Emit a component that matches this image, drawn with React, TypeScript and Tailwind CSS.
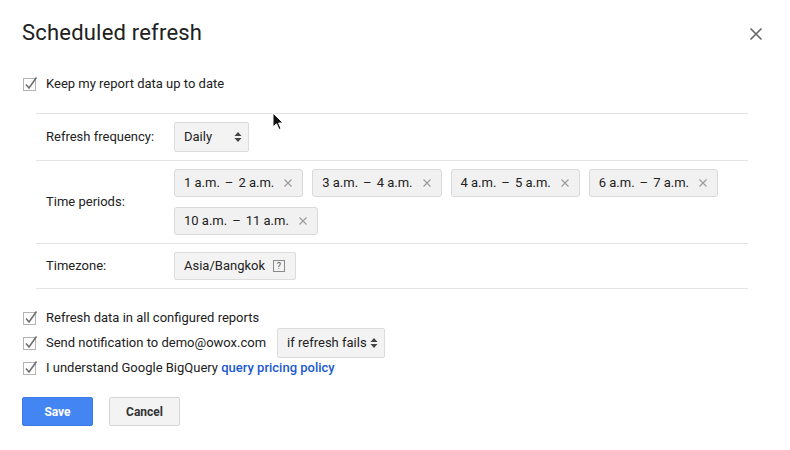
import React from "react";

const periods = [
  ["1 a.m.", "2 a.m."],
  ["3 a.m.", "4 a.m."],
  ["4 a.m.", "5 a.m."],
  ["6 a.m.", "7 a.m."],
  ["10 a.m.", "11 a.m."],
];

function Check() {
  return (
    <svg width="16" height="16" viewBox="0 0 16 16" className="ml-[1px] shrink-0">
      <rect x="0.5" y="2.5" width="12" height="12" fill="#fff" stroke="#b4b4b4" />
      <path d="M3 8.5 L6 12 L13.5 1.5" fill="none" stroke="#6f6f6f" strokeWidth="1.6" />
    </svg>
  );
}

function Arrows() {
  return (
    <svg width="8" height="12" viewBox="0 0 8 12" className="shrink-0">
      <path d="M0.5 5 L4 1 L7.5 5 Z" fill="#444" />
      <path d="M0.5 7 L4 11 L7.5 7 Z" fill="#444" />
    </svg>
  );
}

function Select({ label, width }: { label: string; width: string }) {
  return (
    <div
      className={`${width} h-[30px] flex items-center justify-between pl-[9px] pr-[6px] rounded-[2px] border border-[#dcdcdc] bg-[#f3f3f3] text-[#222]`}
    >
      <span>{label}</span>
      <Arrows />
    </div>
  );
}

function CheckRow({ children }: { children: React.ReactNode }) {
  return (
    <div className="h-[25px] flex items-center gap-[7px]">
      <Check />
      {children}
    </div>
  );
}

function Row({ label, children }: { label: string; children: React.ReactNode }) {
  return (
    <div className="flex items-center pl-[10px] py-[8px] border-t border-[#e3e3e3]">
      <div className="w-[128px] shrink-0 text-[#222]">{label}</div>
      <div className="flex-1">{children}</div>
    </div>
  );
}

export default function App() {
  return (
    <div
      className="relative w-[790px] h-[450px] bg-white text-[13px] leading-[16px] text-[#212121] overflow-hidden"
      style={{ fontFamily: "Roboto, Arial, sans-serif" }}
    >
      <div className="px-[22px] pt-[19px]">
        <div className="flex items-center justify-between h-[28px]">
          <h1 className="text-[22px] leading-[28px] font-normal text-[#202020] tracking-[0.2px]">Scheduled refresh</h1>
          <svg width="14" height="14" viewBox="0 0 14 14" className="mr-[5px] mt-[1px]">
            <path d="M1.5 1.5 L12.5 12.5 M12.5 1.5 L1.5 12.5" stroke="#666" strokeWidth="1.6" />
          </svg>
        </div>

        <div className="mt-[24px]">
          <CheckRow>
            <span>Keep my report data up to date</span>
          </CheckRow>
        </div>

        <div className="mt-[17px] ml-[14px] mr-[20px] border-b border-[#e3e3e3]">
          <Row label="Refresh frequency:">
            <Select label="Daily" width="w-[75px]" />
          </Row>
          <Row label="Time periods:">
            <div className="flex flex-wrap gap-x-[9px] gap-y-[10px]">
              {periods.map(([from, to]) => (
                <div
                  key={from}
                  className="h-[28px] flex items-center pl-[9px] pr-[10px] rounded-[3px] border border-[#d9d9d9] bg-[#f1f1f1] text-[#222]"
                >
                  <span>{from}</span>
                  <span className="mx-[5px]">–</span>
                  <span>{to}</span>
                  <svg width="8" height="8" viewBox="0 0 8 8" className="ml-[10px]">
                    <path d="M0.5 0.5 L7.5 7.5 M7.5 0.5 L0.5 7.5" stroke="#9a9a9a" strokeWidth="1.1" />
                  </svg>
                </div>
              ))}
            </div>
          </Row>
          <Row label="Timezone:">
            <div className="w-[122px] h-[28px] flex items-center justify-between pl-[9px] pr-[10px] rounded-[2px] border border-[#dcdcdc] bg-[#f3f3f3] text-[#222]">
              <span>Asia/Bangkok</span>
              <span className="w-[12px] h-[12px] border border-[#8a8a8a] flex items-center justify-center text-[9px] leading-[9px] text-[#555]">
                ?
              </span>
            </div>
          </Row>
        </div>

        <div className="mt-[16px]">
          <CheckRow>
            <span>Refresh data in all configured reports</span>
          </CheckRow>
          <CheckRow>
            <span>Send notification to demo@owox.com</span>
            <div className="ml-[4px]">
              <Select label="if refresh fails" width="w-[108px]" />
            </div>
          </CheckRow>
          <CheckRow>
            <span>
              I understand Google BigQuery{" "}
              <a className="font-medium text-[#1a5ad0]">query pricing policy</a>
            </span>
          </CheckRow>
        </div>

        <div className="mt-[17px] flex gap-[16px]">
          <button className="w-[71px] h-[29px] rounded-[2px] bg-[#4385f3] border border-[#3d7ae3] text-white text-[12px] font-bold">
            Save
          </button>
          <button className="w-[71px] h-[29px] rounded-[2px] bg-[#f3f3f3] border border-[#d6d6d6] text-[#333] text-[12px] font-bold">
            Cancel
          </button>
        </div>
      </div>

      <svg width="12" height="19" viewBox="0 0 12 19" className="absolute left-[272px] top-[112px]">
        <path d="M1 1 L1 15 L4.5 11.8 L7 17.5 L9 16.6 L6.6 11 L11 11 Z" fill="#111" stroke="#fff" strokeWidth="1" />
      </svg>
    </div>
  );
}
